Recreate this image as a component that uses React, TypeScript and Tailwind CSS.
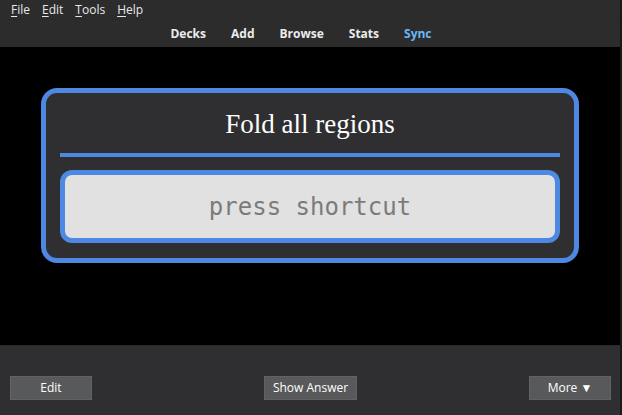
const ui = { fontFamily: '"Open Sans", "Noto Sans", sans-serif' };

function Mnemonic({ label }: { label: string }) {
  return (
    <span>
      <span className="underline underline-offset-2">{label[0]}</span>
      {label.slice(1)}
    </span>
  );
}

function BarButton({ children, w }: { children: React.ReactNode; w: string }) {
  return (
    <button
      className={`h-[24px] ${w} border border-[#626264] bg-[#58595b] text-[12px] text-white`}
      style={ui}
    >
      {children}
    </button>
  );
}

export default function App() {
  const menus = ['File', 'Edit', 'Tools', 'Help'];
  const links = ['Decks', 'Add', 'Browse', 'Stats'];

  return (
    <div className="flex h-[415px] w-[622px] flex-col border-r-2 border-[#1a1a1a] bg-black">
      <header className="flex h-[47px] flex-col bg-[#2c2c2d]" style={ui}>
        <nav className="flex h-[20px] items-center gap-[12px] border-b border-[#29292a] pl-[11px] text-[12px] text-[#e8e8e8]">
          {menus.map((m) => (
            <Mnemonic key={m} label={m} />
          ))}
        </nav>
        <div className="flex flex-1 items-center justify-center gap-[25px] pr-[18px] text-[12px] font-bold text-[#ececec]">
          {links.map((l) => (
            <span key={l}>{l}</span>
          ))}
          <span className="text-[#6bb6f2]">Sync</span>
        </div>
      </header>

      <main className="flex-1 pt-[41px]">
        <section className="mx-auto w-[538px] rounded-[16px] border-[5px] border-[#4d88e2] bg-[#2f2f31] px-[14px] pb-[15px] pt-[15px]">
          <h1
            className="text-center text-[27px] leading-[32px] text-white"
            style={{ fontFamily: '"Liberation Serif", serif' }}
          >
            Fold all regions
          </h1>
          <hr className="mt-[13px] h-[4px] border-0 bg-[#4d88e2]" />
          <div
            className="mt-[13px] flex h-[73px] items-center justify-center rounded-[12px] border-[5px] border-[#4d88e2] bg-[#e1e1e1] text-[24px] text-[#7b7b7b]"
            style={{ fontFamily: '"DejaVu Sans Mono", "Liberation Mono", monospace' }}
          >
            press shortcut
          </div>
        </section>
      </main>

      <footer className="flex h-[70px] items-start justify-between border-t border-[#2a2a2b] bg-[#2f2f31] pl-[10px] pr-[9px] pt-[30px]">
        <BarButton w="w-[82px]">Edit</BarButton>
        <BarButton w="w-[93px]">Show Answer</BarButton>
        <BarButton w="w-[82px]">More ▼</BarButton>
      </footer>
    </div>
  );
}
